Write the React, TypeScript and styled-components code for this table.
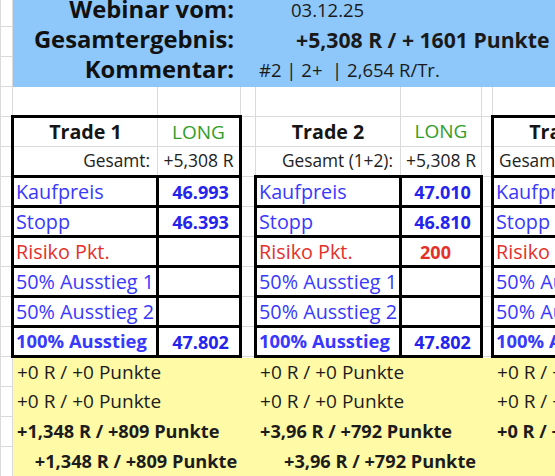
import React from "react";
import styled, { createGlobalStyle, css } from "styled-components";

const GlobalStyle = createGlobalStyle`
  html, body { margin: 0; padding: 0; background: #ffffff; overflow: hidden; }
  body { font-family: "Open Sans", "Liberation Sans", sans-serif; }
`;

const COLS = [12, 145, 83, 15, 145, 81, 11, 145, 83];
const GRID = "#dadada";
const FILLS = { none: "#ffffff", blue: "#8ec8fa", yellow: "#fffaa6" };
const TONES = { ink: "#161616", blue: "#3838ff", deep: "#2424ee", red: "#e4302a", green: "#2f9e28" };

type Fill = keyof typeof FILLS;
type Tone = keyof typeof TONES;

const Sheet = styled.table`
  border-collapse: collapse;
  table-layout: fixed;
  width: ${COLS.reduce((a, b) => a + b, 0)}px;
  margin-top: -4px;
  font-family: "Open Sans", "Liberation Sans", sans-serif;
  font-variant-ligatures: none;
  color: ${TONES.ink};
`;

const Row = styled.tr`
  height: 30px;
`;

const Cell = styled.td<{ $fill?: Fill; $box?: string }>`
  padding: 0;
  white-space: nowrap;
  overflow: hidden;
  vertical-align: middle;
  line-height: 1;
  background: ${(p) => FILLS[p.$fill ?? "none"]};
  border: 1px solid ${(p) => (p.$fill && p.$fill !== "none" ? FILLS[p.$fill] : GRID)};
  ${(p) => p.$box?.includes("t") && css`border-top: 3px solid #000;`}
  ${(p) => p.$box?.includes("r") && css`border-right: 3px solid #000;`}
  ${(p) => p.$box?.includes("b") && css`border-bottom: 3px solid #000;`}
  ${(p) => p.$box?.includes("l") && css`border-left: 3px solid #000;`}
`;

const BandLabel = styled(Cell)`
  font-size: 23.8px;
  font-weight: 700;
  text-align: right;
  padding-right: 21px;
  padding-bottom: 3px;
  color: #111;
`;

const BandValue = styled(Cell)<{ $indent: number; $bold?: boolean }>`
  font-size: ${(p) => (p.$bold ? 21.2 : 18.5)}px;
  font-weight: ${(p) => (p.$bold ? 700 : 400)};
  padding-left: ${(p) => p.$indent}px;
  padding-bottom: 3px;
  white-space: pre;
  color: #1a1a1a;
`;

const TradeTitle = styled(Cell)`
  font-size: 19.7px;
  font-weight: 700;
  text-align: center;
`;

const Direction = styled(Cell)`
  font-size: 19px;
  text-align: center;
  color: ${TONES.green};
`;

const TotalLabel = styled(Cell)`
  font-size: 17.3px;
  text-align: right;
  padding-right: 7px;
  color: #222;
`;

const TotalValue = styled(Cell)`
  font-size: 17.5px;
  text-align: center;
  color: #222;
`;

const FieldLabel = styled(Cell)<{ $tone: Tone; $bold?: boolean }>`
  font-size: ${(p) => (p.$bold ? 18.4 : 19.8)}px;
  font-weight: ${(p) => (p.$bold ? 700 : 400)};
  padding-left: 2px;
  color: ${(p) => TONES[p.$tone]};
`;

const FieldValue = styled(Cell)<{ $tone: Tone; $shift?: number }>`
  font-size: 18px;
  font-weight: 700;
  text-align: center;
  padding-left: 3px;
  padding-right: ${(p) => p.$shift ?? 0}px;
  color: ${(p) => TONES[p.$tone]};
`;

const ResultCell = styled(Cell)<{ $bold?: boolean; $center?: boolean; $nudge?: number }>`
  font-size: ${(p) => (p.$bold ? 18.2 : 19)}px;
  font-weight: ${(p) => (p.$bold ? 700 : 400)};
  text-align: ${(p) => (p.$center ? "center" : "left")};
  padding-left: ${(p) => 4 + (p.$nudge ?? 0)}px;
  color: #1c1c1c;
`;

type Field = { label: string; value: string; tone: Tone; bold?: boolean; shift?: number };
type Trade = {
  title: string;
  dir: string;
  totalLabel: string;
  total: string;
  boxed: boolean;
  fields: Field[];
  results: string[];
  span: number;
  nudge: number;
};

const fieldsFor = (buy: string, stop: string, risk: string, exit: string, shift = 0): Field[] => [
  { label: "Kaufpreis", value: buy, tone: "blue" },
  { label: "Stopp", value: stop, tone: "blue" },
  { label: "Risiko Pkt.", value: risk, tone: "red", shift },
  { label: "50% Ausstieg 1", value: "", tone: "blue" },
  { label: "50% Ausstieg 2", value: "", tone: "blue" },
  { label: "100% Ausstieg", value: exit, tone: "blue", bold: true },
];

const TRADES: Trade[] = [
  {
    title: "Trade 1",
    dir: "LONG",
    totalLabel: "Gesamt:",
    total: "+5,308 R",
    boxed: true,
    fields: fieldsFor("46.993", "46.393", "", "47.802"),
    results: ["+0 R / +0 Punkte", "+0 R / +0 Punkte", "+1,348 R / +809 Punkte", "+1,348 R / +809 Punkte"],
    span: 3,
    nudge: 0,
  },
  {
    title: "Trade 2",
    dir: "LONG",
    totalLabel: "Gesamt (1+2):",
    total: "+5,308 R",
    boxed: false,
    fields: fieldsFor("47.010", "46.810", "200", "47.802", 14),
    results: ["+0 R / +0 Punkte", "+0 R / +0 Punkte", "+3,96 R / +792 Punkte", "+3,96 R / +792 Punkte"],
    span: 3,
    nudge: 8,
  },
  {
    title: "Trade 3",
    dir: "LONG",
    totalLabel: "Gesamt (1+2+3):",
    total: "+5,308 R",
    boxed: true,
    fields: fieldsFor("", "", "", ""),
    results: ["+0 R / +0 Punkte", "+0 R / +0 Punkte", "+0 R / +0 Punkte", ""],
    span: 2,
    nudge: 0,
  },
];

const BAND = [
  { label: "Webinar vom:", value: "03.12.25", indent: 35, bold: false },
  { label: "Gesamtergebnis:", value: "+5,308 R / + 1601 Punkte", indent: 40, bold: true },
  { label: "Kommentar:", value: "#2 | 2+  | 2,654 R/Tr.", indent: 3, bold: false },
];

const withSpacer = (i: number, node: React.ReactNode[], key: string) =>
  i < TRADES.length - 1 ? [...node, <Cell key={`${key}-sp`} />] : node;

export default function App() {
  return (
    <>
      <GlobalStyle />
      <Sheet>
        <colgroup>
          {COLS.map((w, i) => (
            <col key={i} style={{ width: w }} />
          ))}
        </colgroup>
        <tbody>
          {BAND.map((b) => (
            <Row key={b.label}>
              <Cell />
              <BandLabel $fill="blue" colSpan={3}>{b.label}</BandLabel>
              <BandValue $fill="blue" colSpan={5} $indent={b.indent} $bold={b.bold}>
                {b.value}
              </BandValue>
            </Row>
          ))}

          <Row>
            {COLS.map((_, i) => (
              <Cell key={i} />
            ))}
          </Row>

          <Row>
            <Cell />
            {TRADES.flatMap((t, i) =>
              withSpacer(
                i,
                [
                  <TradeTitle key={`${t.title}-t`} $box={t.boxed ? "tl" : ""}>{t.title}</TradeTitle>,
                  <Direction key={`${t.title}-d`} $box={t.boxed ? "tr" : ""}>{t.dir}</Direction>,
                ],
                `h1-${i}`
              )
            )}
          </Row>

          <Row>
            <Cell />
            {TRADES.flatMap((t, i) =>
              withSpacer(
                i,
                [
                  <TotalLabel key={`${t.title}-gl`} $box={t.boxed ? "l" : ""}>{t.totalLabel}</TotalLabel>,
                  <TotalValue key={`${t.title}-gv`} $box={t.boxed ? "r" : ""}>{t.total}</TotalValue>,
                ],
                `h2-${i}`
              )
            )}
          </Row>

          {TRADES[0].fields.map((_, r) => (
            <Row key={`f-${r}`}>
              <Cell />
              {TRADES.flatMap((t, i) => {
                const f = t.fields[r];
                return withSpacer(
                  i,
                  [
                    <FieldLabel key={`${t.title}-fl`} $box="trbl" $tone={f.tone} $bold={f.bold}>
                      {f.label}
                    </FieldLabel>,
                    <FieldValue key={`${t.title}-fv`} $box="trbl" $tone={f.tone === "red" ? "red" : "deep"} $shift={f.shift}>
                      {f.value}
                    </FieldValue>,
                  ],
                  `f-${r}-${i}`
                );
              })}
            </Row>
          ))}

          {[0, 1, 2, 3].map((r) => (
            <Row key={`r-${r}`}>
              <Cell />
              {TRADES.map((t) => (
                <ResultCell
                  key={t.title}
                  $fill="yellow"
                  colSpan={t.span}
                  $bold={r >= 2}
                  $center={r === 3}
                  $nudge={r === 3 ? t.nudge : 0}
                >
                  {t.results[r]}
                </ResultCell>
              ))}
            </Row>
          ))}
        </tbody>
      </Sheet>
    </>
  );
}
